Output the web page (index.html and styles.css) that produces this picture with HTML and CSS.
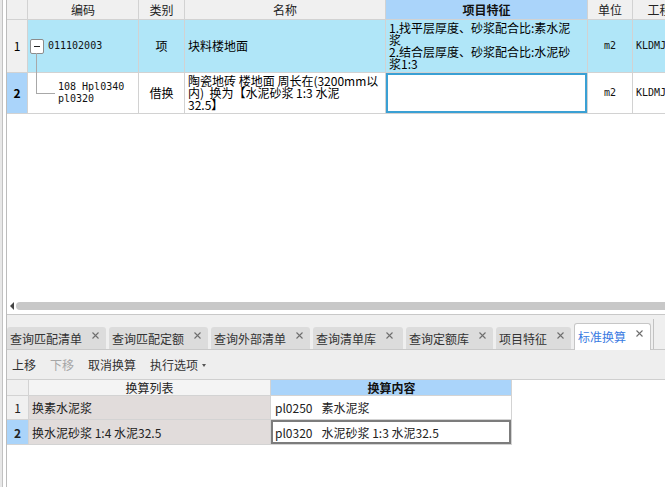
FILE: index.html
```html
<!DOCTYPE html>
<html lang="zh">
<head>
<meta charset="utf-8">
<title>标准换算</title>
<link rel="stylesheet" href="styles.css">
</head>
<body>
<div class="app">
  <div class="side"></div>
  <div class="main">
    <section class="grid-top">
      <div class="trow thead">
        <div class="c rn"></div>
        <div class="c">编码</div>
        <div class="c">类别</div>
        <div class="c">名称</div>
        <div class="c hsel">项目特征</div>
        <div class="c">单位</div>
        <div class="c">工程量表达式</div>
      </div>
      <div class="trow r1">
        <div class="c rn">1</div>
        <div class="c code"><span class="tbox"></span><span class="mono">011102003</span><i class="tl1"></i></div>
        <div class="c ctr">项</div>
        <div class="c">块料楼地面</div>
        <div class="c"><div class="lines">1.找平层厚度、砂浆配合比:素水泥<br>浆<br>2.结合层厚度、砂浆配合比:水泥砂<br>浆1:3</div></div>
        <div class="c ctr"><span class="mono">m2</span></div>
        <div class="c"><span class="mono">KLDMJ</span></div>
      </div>
      <div class="trow r2">
        <div class="c rn">2</div>
        <div class="c code2"><i class="tl2"></i><div class="lines mono">108 Hpl0340<br>pl0320</div></div>
        <div class="c ctr">借换</div>
        <div class="c"><div class="lines pre">陶瓷地砖 楼地面 周长在(3200mm以<br>内)  换为【水泥砂浆 1:3 水泥<br>32.5】</div></div>
        <div class="c csel"></div>
        <div class="c ctr"><span class="mono">m2</span></div>
        <div class="c"><span class="mono">KLDMJ</span></div>
      </div>
      <div class="fill"></div>
      <div class="hscroll"><span class="arrow"></span><span class="thumb"></span></div>
    </section>

    <nav class="tabbar">
      <div class="tab">查询匹配清单<svg class="x" viewBox="0 0 7 7"><path d="M0.5 0.5L6.5 6.5M6.5 0.5L0.5 6.5"/></svg></div>
      <div class="tab">查询匹配定额<svg class="x" viewBox="0 0 7 7"><path d="M0.5 0.5L6.5 6.5M6.5 0.5L0.5 6.5"/></svg></div>
      <div class="tab">查询外部清单<svg class="x" viewBox="0 0 7 7"><path d="M0.5 0.5L6.5 6.5M6.5 0.5L0.5 6.5"/></svg></div>
      <div class="tab wide">查询清单库<svg class="x" viewBox="0 0 7 7"><path d="M0.5 0.5L6.5 6.5M6.5 0.5L0.5 6.5"/></svg></div>
      <div class="tab">查询定额库<svg class="x" viewBox="0 0 7 7"><path d="M0.5 0.5L6.5 6.5M6.5 0.5L0.5 6.5"/></svg></div>
      <div class="tab">项目特征<svg class="x" viewBox="0 0 7 7"><path d="M0.5 0.5L6.5 6.5M6.5 0.5L0.5 6.5"/></svg></div>
      <div class="tab active">标准换算<svg class="x" viewBox="0 0 7 7"><path d="M0.5 0.5L6.5 6.5M6.5 0.5L0.5 6.5"/></svg></div>
      <div class="tabedge"></div>
    </nav>

    <div class="toolbar">
      <span class="tb">上移</span>
      <span class="tb dis">下移</span>
      <span class="tb">取消换算</span>
      <span class="tb">执行选项<i class="caret"></i></span>
    </div>

    <section class="grid-bot">
      <div class="brow bhead">
        <div class="c rn"></div>
        <div class="c h1">换算列表</div>
        <div class="c hsel">换算内容</div>
      </div>
      <div class="brow b1">
        <div class="c rn">1</div>
        <div class="c lst">换素水泥浆</div>
        <div class="c"><span class="code-no">pl0250</span>素水泥浆</div>
      </div>
      <div class="brow b2">
        <div class="c rn">2</div>
        <div class="c lst">换水泥砂浆 1:4 水泥32.5</div>
        <div class="c csel2"><span class="code-no">pl0320</span>水泥砂浆 1:3 水泥32.5</div>
      </div>
    </section>
  </div>
</div>
</body>
</html>
```
FILE: styles.css
```css
* { box-sizing: border-box; }
html, body { margin: 0; padding: 0; }
body {
  width: 665px;
  height: 487px;
  overflow: hidden;
  background: #fff;
  font-family: "Noto Sans CJK SC", sans-serif;
  font-size: 12px;
  color: #000;
}
.app { display: flex; height: 487px; }
.side {
  width: 6px;
  flex: none;
  background: linear-gradient(to right, #e8e8e8 0 2px, #c2c2c2 2px 3px, #fff 3px);
}
.main {
  flex: none;
  width: 659px;
  border-left: 1px solid #bcbcbc;
  display: flex;
  flex-direction: column;
  overflow: hidden;
}

/* ---------- top grid ---------- */
.grid-top {
  height: 315px;
  flex: none;
  display: flex;
  flex-direction: column;
  border-bottom: 1px solid #c8c8c8;
  background: #fff;
}
.trow {
  display: grid;
  grid-template-columns: 21px 111px 46px 201px 202px 45px 102px;
  flex: none;
}
.trow > .c {
  border-right: 1px solid #d2d2d2;
  border-bottom: 1px solid #d2d2d2;
  display: flex;
  align-items: center;
  padding: 0 3px;
  white-space: nowrap;
  overflow: hidden;
  position: relative;
  line-height: 12px;
}
.trow > .ctr { justify-content: center; }
.thead { height: 20px; }
.thead > .c { justify-content: center; background: #f0f0f0; color: #222; line-height: 14px; }
.thead > .hsel { background: #aad4fa; font-weight: bold; color: #111; }
.trow > .rn { justify-content: center; background: #f0f0f0; padding: 0; }
.r1 { height: 53px; }
.r1 > .c { background: #b0e6f8; }
.r1 > .rn { background: #f0f0f0; }
.r2 { height: 41px; }
.r2 > .rn { background: #aad4fa; font-weight: bold; }
.trow > .code { padding-left: 2px; overflow: visible; z-index: 1; }
.tbox {
  width: 14px;
  height: 15px;
  border: 1px solid #8c8c8c;
  border-radius: 2px;
  background: #fff;
  margin-right: 4px;
  position: relative;
  flex: none;
}
.tbox::after {
  content: "";
  position: absolute;
  left: 3px;
  right: 3px;
  top: 6px;
  height: 1px;
  background: #222;
}
.tl1 {
  position: absolute;
  left: 8px;
  bottom: -1px;
  height: 20px;
  border-left: 1px solid #a8a8a8;
}
.trow > .code2 { padding-left: 30px; overflow: visible; }
.tl2 {
  position: absolute;
  left: 8px;
  top: -1px;
  width: 19px;
  height: 22px;
  border-left: 1px solid #a8a8a8;
  border-bottom: 1px solid #a8a8a8;
}
.lines { line-height: 12px; }
.pre { white-space: pre; }
.mono {
  font-family: "DejaVu Sans Mono", monospace;
  font-size: 10px;
  color: #111;
}
.csel { box-shadow: inset 0 0 0 2px #3aa0d4; }
.fill { flex: 1; }
.hscroll {
  height: 16px;
  flex: none;
  display: flex;
  align-items: center;
  padding-left: 3px;
}
.arrow {
  width: 0;
  height: 0;
  border-top: 4px solid transparent;
  border-bottom: 4px solid transparent;
  border-right: 4px solid #444;
  flex: none;
}
.thumb {
  flex: none;
  width: 700px;
  height: 8px;
  margin-left: 2px;
  border-radius: 4px;
  background: #c8c8c8;
}

/* ---------- tabs ---------- */
.tabbar {
  height: 35px;
  flex: none;
  display: flex;
  align-items: flex-end;
  gap: 3px;
  background: #efefef;
  border-bottom: 1px solid #c9c9c9;
}
.tab {
  height: 22px;
  display: flex;
  align-items: center;
  padding: 0 7px 0 3px;
  background: #dcdcdc;
  border-radius: 3px 3px 0 0;
  color: #333;
  white-space: nowrap;
  flex: none;
}
.tab.wide { padding-right: 10px; }
.tab .x {
  width: 7px;
  height: 7px;
  margin-left: 10px;
  margin-bottom: 5px;
  fill: none;
  stroke: #6e6e6e;
  stroke-width: 1.1;
}
.tab.active {
  height: 27px;
  margin-bottom: -1px;
  background: #fff;
  border: 1px solid #c6c6c6;
  border-bottom: none;
  color: #3a7be2;
  padding-bottom: 2px;
}
.tabedge {
  width: 1px;
  height: 30px;
  background: #c2c2c2;
  margin-left: -1px;
  flex: none;
}

/* ---------- toolbar ---------- */
.toolbar {
  height: 30px;
  flex: none;
  display: flex;
  align-items: center;
  gap: 14px;
  padding-left: 5px;
  background: #eeeeee;
  border-bottom: 1px solid #cfcfcf;
  color: #333;
}
.tb { display: flex; align-items: center; white-space: nowrap; }
.tb.dis { color: #a6a6a6; }
.caret {
  width: 0;
  height: 0;
  margin-left: 4px;
  margin-top: 2px;
  border-left: 2.5px solid transparent;
  border-right: 2.5px solid transparent;
  border-top: 3px solid #555;
}

/* ---------- bottom grid ---------- */
.grid-bot {
  flex: 1;
  background: #fff;
  color: #222;
}
.brow {
  display: grid;
  grid-template-columns: 22px 242px 241px;
}
.brow > .c {
  border-right: 1px solid #d3d3d3;
  border-bottom: 1px solid #d3d3d3;
  display: flex;
  align-items: center;
  padding: 0 3px;
  white-space: nowrap;
}
.brow > .c:nth-child(3) { padding-left: 4px; }
.code-no { margin-right: 9px; }
.bhead { height: 16px; }
.bhead > .c { justify-content: center; line-height: 14px; }
.bhead > .rn { background: #f0f0f0; }
.bhead > .h1 { background: #f4f4f4; }
.bhead > .hsel { background: #aad4fa; font-weight: bold; color: #111; }
.brow > .rn { justify-content: center; background: #f0f0f0; padding: 0; }
.b1 { height: 24px; }
.b2 { height: 25px; }
.b2 > .rn { background: #aad4fa; font-weight: bold; }
.brow > .lst { background: #e1dcdb; }
.brow > .csel2 { box-shadow: inset 0 0 0 2px #7c7c7c; }
```
